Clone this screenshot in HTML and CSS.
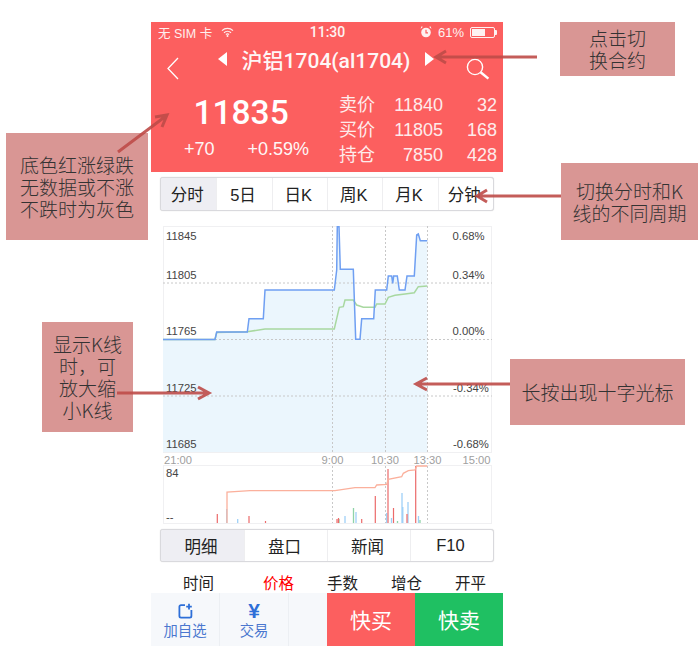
FILE: index.html
```html
<!DOCTYPE html>
<html lang="zh-CN">
<head>
<meta charset="utf-8">
<title>沪铝1704</title>
<link rel="stylesheet" href="styles.css">
</head>
<body>
<main class="phone">
  <header class="head">
    <div class="status">
      <div class="status-left">
        <span>无 SIM 卡</span>
        <svg class="wifi" viewBox="0 0 13 10"><path d="M1 3.6a8 8 0 0 1 11 0M3 5.700a5.200 5.200 0 0 1 7 0M4.900 7.600a2.400 2.400 0 0 1 3.200 0"/><circle cx="6.500" cy="9" r="1"/></svg>
      </div>
      <div class="status-time">11:30</div>
      <div class="status-right">
        <svg class="alarm" viewBox="0 0 12 12"><circle cx="6" cy="6.500" r="4.800"/><path class="alarm-hand" d="M6 3.800v3h2"/><path d="M0.600 3 3 .8 1.200.4zM11.400 3 9 .8l1.800-.4z"/></svg>
        <span>61%</span>
        <span class="battery"><span class="battery-fill"></span></span>
      </div>
    </div>
    <div class="title-row">
      <svg class="back" viewBox="0 0 13 23"><path d="M12 1 2 11.500 12 22"/></svg>
      <div class="title">
        <span class="tri tri-left"></span>
        <span class="title-text">沪铝1704(al1704)</span>
        <span class="tri tri-right"></span>
      </div>
      <svg class="search" viewBox="0 0 24 22"><circle cx="9" cy="9" r="7.600"/><path d="M14.600 14.200 22.400 20.600" class="search-handle"/></svg>
    </div>
    <div class="quote">
      <div class="quote-main">
        <div class="price">11835</div>
        <div class="change"><span>+70</span><span>+0.59%</span></div>
      </div>
      <div class="book">
        <span class="book-label">卖价</span><span>11840</span><span>32</span>
        <span class="book-label">买价</span><span>11805</span><span>168</span>
        <span class="book-label">持仓</span><span>7850</span><span>428</span>
      </div>
    </div>
  </header>

  <nav class="seg seg-period">
    <span class="seg-item is-active">分时</span><span class="seg-item">5日</span><span class="seg-item">日K</span><span class="seg-item">周K</span><span class="seg-item">月K</span><span class="seg-item">分钟</span>
  </nav>

  <svg class="chart" viewBox="163 226 330 298">
    <rect class="frame" x="163.500" y="226.500" width="328" height="226"/>
    <rect class="frame" x="163.500" y="465.500" width="328" height="58"/>
    <path class="area" d="M163 339.500H215L216.700 332H247.300L249 318.700H263.300L265 290H334.300L336.700 270L337.300 226.700H339L340.300 269.300H353.300L355.700 339.300H360L361.700 318.700H373.700L375.300 290H386.700L388.300 276H391.700L392.700 283.300L393.700 276H397.300L399.300 290H405L407 276H414.300L416.700 235L418.300 234L420.300 240.700H427.300V452H163Z"/>
    <path class="grid" d="M163 283H492M163 339.500H492M163 396H492M332.500 226V452M385.500 226V452M427.500 226V452M332.500 466V523M385.500 466V523M427.500 466V523"/>
    <path class="line-green" d="M163 339.500H215L216.700 332.500L247.300 331.700L265 329H334.300L339.300 307.300L343.300 306.700L345 300H353.300L356.700 305L363.300 307.300H375L376.700 304H385L388.300 297.300L395 295.300L405 294L414.300 292.700L418.300 286.700L427.300 286"/>
    <path class="line-blue" d="M163 339.500H215L216.700 332H247.300L249 318.700H263.300L265 290H334.300L336.700 270L337.300 226.700H339L340.300 269.300H353.300L355.700 339.300H360L361.700 318.700H373.700L375.300 290H386.700L388.300 276H391.700L392.700 283.300L393.700 276H397.300L399.300 290H405L407 276H414.300L416.700 235L418.300 234L420.300 240.700H427.300"/>
    <text class="axis" x="166" y="240">11845</text>
    <text class="axis" x="166" y="279">11805</text>
    <text class="axis" x="166" y="335">11765</text>
    <text class="axis" x="166" y="391.500">11725</text>
    <text class="axis" x="166" y="448">11685</text>
    <text class="axis" x="452.500" y="240">0.68%</text>
    <text class="axis" x="452.500" y="279">0.34%</text>
    <text class="axis" x="452.500" y="335">0.00%</text>
    <text class="axis" x="453" y="391.500">-0.34%</text>
    <text class="axis" x="453" y="448">-0.68%</text>
    <text class="axis-time" x="164" y="463.500">21:00</text>
    <text class="axis-time mid" x="332.500" y="463.500">9:00</text>
    <text class="axis-time mid" x="385" y="463.500">10:30</text>
    <text class="axis-time mid" x="427.500" y="463.500">13:30</text>
    <text class="axis-time end" x="490.500" y="463.500">15:00</text>
    <path class="vol-blue" d="M226.700 523V509M237.700 523V519M345 523V516M356 523V512M386.700 523V513M391.500 523V518M402 523V493M402.800 523V507M408 523V502M418.500 523V516"/>
    <path class="vol-green" d="M339 523V519M353.500 523V508M397.500 523V521M420 523V520"/>
    <path class="vol-red" d="M217.300 523V514M249 523V516M265.500 523V521M337 523V519M338.500 523V518M361.700 523V519M375.300 523V496M388 523V469M393.500 523V508M407 523V514M415.700 523V466"/>
    <path class="line-orange" d="M227 523V492L250 490.700H335L355 487.700H375L376.700 485L386.700 484.300L388.300 479.300L401.700 476.700L403.300 473.300L408.300 470.700L415 470L416.700 466H427.300"/>
    <text class="axis" x="166" y="477">84</text>
    <text class="axis" x="166" y="521">--</text>
  </svg>

  <nav class="seg seg-detail">
    <span class="seg-item is-active">明细</span><span class="seg-item">盘口</span><span class="seg-item">新闻</span><span class="seg-item">F10</span>
  </nav>

  <div class="cols">
    <span>时间</span><span class="is-red">价格</span><span>手数</span><span>增仓</span><span>开平</span>
  </div>

  <footer class="bar">
    <div class="tool">
      <svg class="tool-icon" viewBox="0 0 15 16"><path d="M7 2.200H3a1.600 1.600 0 0 0-1.600 1.600v9.200A1.600 1.600 0 0 0 3 14.600h8.800a1.600 1.600 0 0 0 1.600-1.600V7"/><path d="M11 .8v5.600M8.200 3.600h5.600"/></svg>
      <span>加自选</span>
    </div>
    <div class="tool">
      <span class="yen">¥</span>
      <span>交易</span>
    </div>
    <div class="tool"></div>
    <div class="action action-buy">快买</div>
    <div class="action action-sell">快卖</div>
  </footer>
</main>

<aside class="note note-a">底色红涨绿跌<br>无数据或不涨<br>不跌时为灰色</aside>
<aside class="note note-b">显示K线<br>时，可<br>放大缩<br>小K线</aside>
<aside class="note note-c">点击切<br>换合约</aside>
<aside class="note note-d">切换分时和K<br>线的不同周期</aside>
<aside class="note note-e">长按出现十字光标</aside>

<svg class="arrows" viewBox="0 0 700 656">
  <path d="M537 57H437M446 51 436 57 446 63"/>
  <path d="M118 152 166 116M155 117 167 115 162 127"/>
  <path d="M561 196H478M487 190 477 196 487 202"/>
  <path d="M117 393H208M198 387 209 393 198 399"/>
  <path d="M510 384H417M427 378 416 384 427 390"/>
</svg>
</body>
</html>
```

FILE: styles.css
```css
* { box-sizing: border-box; }
html, body { margin: 0; height: 656px; overflow: hidden; background: #fff; }
body { position: relative; font-family: "Liberation Sans", "Noto Sans CJK SC", sans-serif; color: #222; }

.phone { width: 352px; height: 624px; margin: 22px 0 0 151px; display: flex; flex-direction: column; }

.head { height: 150px; background: #fc5f5f; color: #fff; flex: none; overflow: hidden; }
.status { height: 20px; padding: 0 6px 0 7px; display: grid; grid-template-columns: 1fr auto 1fr; align-items: center; font-size: 12.500px; }
.status-left { display: flex; align-items: center; gap: 9px; opacity: .9; }
.wifi { width: 13px; height: 10px; fill: #fff; }
.wifi path { fill: none; stroke: #fff; stroke-width: 1.300; }
.status-time { font-family: Roboto, "Liberation Sans", sans-serif; font-size: 14px; font-weight: 500; opacity: .92; }
.status-right { display: flex; align-items: center; justify-content: flex-end; gap: 6px; font-size: 13px; opacity: .92; }
.alarm { width: 12px; height: 12px; fill: #fff; }
.alarm-hand { fill: none; stroke: #fc5f5f; stroke-width: 1.200; }
.battery { width: 25px; height: 11px; margin-right: 2px; border: 1px solid #fff; border-radius: 2px; padding: 1px; display: block; position: relative; }
.battery::after { content: ""; position: absolute; right: -3px; top: 2px; width: 2px; height: 5px; background: #fff; border-radius: 0 1px 1px 0; }
.battery-fill { display: block; width: 61%; height: 100%; background: #fff; }

.title-row { height: 40px; position: relative; display: flex; align-items: center; justify-content: center; }
.title { display: flex; align-items: center; gap: 15px; margin-top: -6px; margin-left: -2px; }
.title-text { font-family: Roboto, "Noto Sans CJK SC", sans-serif; font-size: 21px; font-weight: 500; white-space: nowrap; opacity: .95; }
.tri { width: 0; height: 0; border-top: 7px solid transparent; border-bottom: 7px solid transparent; }
.tri-left { border-right: 9px solid #fff; }
.tri-right { border-left: 9px solid #fff; }
.back { position: absolute; left: 15px; top: 15px; width: 13px; height: 23px; fill: none; stroke: #fff; stroke-width: 1.300; }
.search { position: absolute; left: 315px; top: 16px; width: 24px; height: 22px; fill: none; stroke: #fff; stroke-width: 1.400; }
.search-handle { stroke-width: 2.400; }

.quote { display: flex; padding-top: 10px; }
.quote-main { width: 188px; padding-left: 33px; }
.price { font-family: Roboto, "Liberation Sans", sans-serif; font-size: 33.500px; font-weight: 500; line-height: 42px; padding-left: 9.500px; }
.change { display: flex; gap: 33px; font-size: 18px; line-height: 24px; margin-top: 3px; opacity: .95; }
.book { display: grid; grid-template-columns: 40px 64px 54px; font-size: 18px; line-height: 24.800px; text-align: right; opacity: .88; width: 158px; margin-top: 1px; white-space: nowrap; }
.book-label { text-align: left; }

.seg { margin-left: 9px; width: 334px; border: 1px solid #d9d9dd; border-radius: 3px; display: grid; flex: none; background: #fff; font-size: 16.500px; overflow: hidden; box-shadow: 0 0 1px #ccc; }
.seg-item { display: flex; align-items: center; justify-content: center; padding-right: 3px; border-left: 1px solid #eeeef0; }
.seg-item:first-child { border-left: 0; }
.is-active { background: #eeeef3; }
.seg-period { height: 34px; margin-top: 5px; grid-template-columns: repeat(6, 1fr); }
.seg-detail { height: 33px; margin-top: 5px; grid-template-columns: repeat(4, 1fr); }

.chart { display: block; flex: none; width: 330px; height: 298px; margin: 15px 0 0 12px; }
.frame { fill: #fff; stroke: #f0f0f2; }
.area { fill: #ebf6fd; }
.grid { fill: none; stroke: #c8c8c8; stroke-dasharray: 2 2; }
.line-blue { fill: none; stroke: #6f9ff2; stroke-width: 1.500; }
.line-green { fill: none; stroke: #a8d8a0; stroke-width: 1.500; }
.line-orange { fill: none; stroke: #fbb09c; stroke-width: 1.300; }
.vol-blue { fill: none; stroke: #9fd0f7; stroke-width: 1.300; }
.vol-green { fill: none; stroke: #8fd3a8; stroke-width: 1.300; }
.vol-red { fill: none; stroke: #ec6a6a; stroke-width: 1.200; }
.axis { font-size: 11.300px; fill: #444; }
.axis-time { font-size: 11.200px; fill: #a0a0a0; }
.end { text-anchor: end; }
.mid { text-anchor: middle; }

.cols { height: 31px; padding: 13px 0 0 32px; display: grid; grid-template-columns: 80px repeat(4, 64px); font-size: 15.500px; line-height: 18px; color: #222; flex: none; }
.is-red { color: #f00; }

.bar { height: 53px; flex: none; display: grid; grid-template-columns: 69px 69px 38px 88px 88px; background: #f6f8fb; }
.tool { display: flex; flex-direction: column; align-items: center; justify-content: flex-end; padding-bottom: 6px; font-size: 14.300px; line-height: 18px; color: #4b77cf; border-right: 1px solid #eceff3; }
.tool:nth-child(3) { border-right: 0; }
.tool-icon { width: 15px; height: 16px; margin-bottom: 3px; fill: none; stroke: #2e6fd8; stroke-width: 1.800; }
.yen { font-size: 21px; line-height: 19px; font-weight: 700; color: #2e6fd8; margin-bottom: 2px; }
.action { display: flex; align-items: center; justify-content: center; padding-bottom: 2px; color: #fff; font-size: 21px; }
.action-buy { background: #fc5f5f; }
.action-sell { background: #1fc062; }

.note { position: absolute; display: flex; align-items: center; justify-content: center; text-align: center; background: #d99694; color: #333; font-family: "Noto Sans CJK SC", sans-serif; font-weight: 300; font-size: 19px; line-height: 22px; }
.note-a { left: 6px; top: 133px; width: 142px; height: 107px; }
.note-b { left: 42px; top: 322px; width: 91px; height: 110px; }
.note-c { left: 560px; top: 22px; width: 115px; height: 54px; }
.note-d { left: 561px; top: 163px; width: 137px; height: 77px; }
.note-e { left: 510px; top: 359px; width: 175px; height: 66px; }

.arrows { position: absolute; left: 0; top: 0; width: 700px; height: 656px; fill: none; stroke: #be4b48; stroke-width: 3; stroke-opacity: .9; pointer-events: none; }
```
